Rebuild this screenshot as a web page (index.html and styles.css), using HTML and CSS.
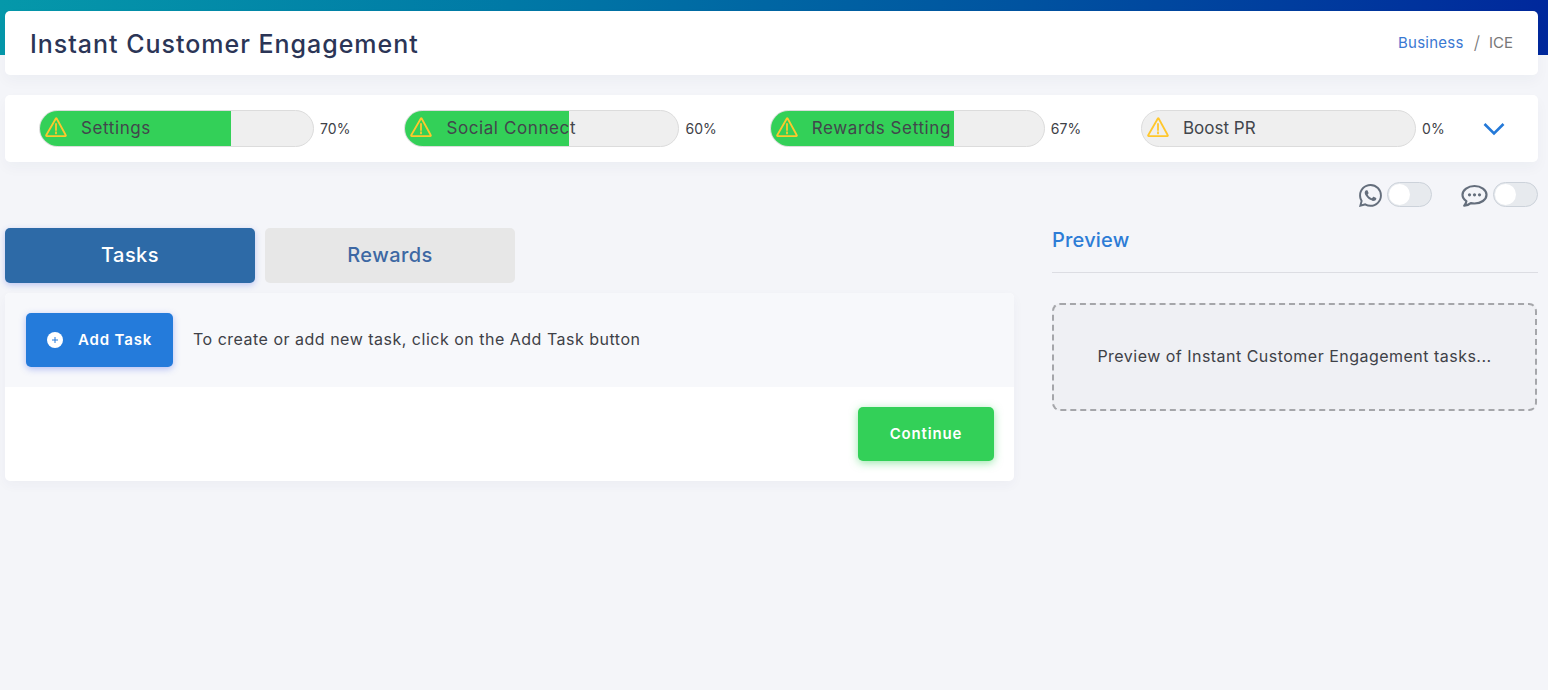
FILE: index.html
```html
<!DOCTYPE html>
<html lang="en">
<head>
<meta charset="utf-8">
<title>Instant Customer Engagement</title>
<link rel="stylesheet" href="styles.css">
</head>
<body>
<div class="page">
  <header class="card page-head">
    <h1 class="page-title">Instant Customer Engagement</h1>
    <nav class="crumbs"><a class="crumb-link">Business</a><span class="crumb-sep">/</span><span class="crumb-current">ICE</span></nav>
  </header>

  <section class="card progress-card">
    <div class="progress-item">
      <div class="pill">
        <div class="pill-fill" style="width:70%"></div>
        <div class="pill-label"><svg class="warn" viewBox="0 0 22 20"><path d="M11 1.2 1.2 18.2a.6.6 0 0 0 .5.9h18.6a.6.6 0 0 0 .5-.9L11.5 1.2a.3.3 0 0 0-.5 0Z"/><path d="M11 7v6M11 15.2v1.2"/></svg><span>Settings</span></div>
      </div>
      <span class="pct">70%</span>
    </div>
    <div class="progress-item">
      <div class="pill">
        <div class="pill-fill" style="width:60%"></div>
        <div class="pill-label"><svg class="warn" viewBox="0 0 22 20"><path d="M11 1.2 1.2 18.2a.6.6 0 0 0 .5.9h18.6a.6.6 0 0 0 .5-.9L11.5 1.2a.3.3 0 0 0-.5 0Z"/><path d="M11 7v6M11 15.2v1.2"/></svg><span>Social Connect</span></div>
      </div>
      <span class="pct">60%</span>
    </div>
    <div class="progress-item">
      <div class="pill">
        <div class="pill-fill" style="width:67%"></div>
        <div class="pill-label"><svg class="warn" viewBox="0 0 22 20"><path d="M11 1.2 1.2 18.2a.6.6 0 0 0 .5.9h18.6a.6.6 0 0 0 .5-.9L11.5 1.2a.3.3 0 0 0-.5 0Z"/><path d="M11 7v6M11 15.2v1.2"/></svg><span>Rewards Setting</span></div>
      </div>
      <span class="pct">67%</span>
    </div>
    <div class="progress-item progress-item-last">
      <div class="pill">
        <div class="pill-fill" style="width:0%"></div>
        <div class="pill-label"><svg class="warn" viewBox="0 0 22 20"><path d="M11 1.2 1.2 18.2a.6.6 0 0 0 .5.9h18.6a.6.6 0 0 0 .5-.9L11.5 1.2a.3.3 0 0 0-.5 0Z"/><path d="M11 7v6M11 15.2v1.2"/></svg><span>Boost PR</span></div>
      </div>
      <span class="pct">0%</span>
    </div>
    <svg class="chevron" viewBox="0 0 22 14"><path d="M1.5 2 11 11.5 20.5 2"/></svg>
  </section>

  <div class="channel-row">
    <div class="channel">
      <svg class="wa-icon" viewBox="0 0 16 16"><path d="M13.601 2.326A7.854 7.854 0 0 0 7.994 0C3.627 0 .068 3.558.064 7.926c0 1.399.366 2.76 1.057 3.965L0 16l4.204-1.102a7.933 7.933 0 0 0 3.79.965h.004c4.368 0 7.926-3.558 7.93-7.93A7.898 7.898 0 0 0 13.6 2.326zM7.994 14.521a6.573 6.573 0 0 1-3.356-.92l-.24-.144-2.494.654.666-2.433-.156-.251a6.56 6.56 0 0 1-1.007-3.505c0-3.626 2.957-6.584 6.591-6.584a6.56 6.56 0 0 1 4.66 1.931 6.557 6.557 0 0 1 1.928 4.66c-.004 3.639-2.961 6.592-6.592 6.592zm3.615-4.934c-.197-.099-1.17-.578-1.353-.646-.182-.065-.315-.099-.445.099-.133.197-.513.646-.627.775-.114.133-.232.148-.43.05-.197-.1-.836-.308-1.592-.985-.59-.525-.985-1.175-1.103-1.372-.114-.198-.011-.304.088-.403.087-.088.197-.232.296-.346.1-.114.133-.198.198-.33.065-.134.034-.248-.015-.347-.05-.099-.445-1.076-.612-1.47-.16-.389-.323-.335-.445-.34-.114-.007-.247-.007-.38-.007a.729.729 0 0 0-.529.247c-.182.198-.691.677-.691 1.654 0 .977.71 1.916.81 2.049.098.133 1.394 2.132 3.383 2.992.47.205.84.326 1.129.418.475.152.904.129 1.246.08.38-.058 1.171-.48 1.338-.943.164-.464.164-.86.114-.943-.049-.084-.182-.133-.38-.232z"/></svg>
      <span class="switch"><span class="knob"></span></span>
    </div>
    <div class="channel">
      <svg class="chat-icon" viewBox="0 0 27 24"><path class="chat-line" d="M13.500 2C7 2 1.500 5.900 1.500 10.800c0 2.500 1.300 4.700 3.900 6.300-.2 1.600-1 3.200-2.200 4.600 2.700-.3 5-1.300 6.600-2.600 1.200.3 2.400.4 3.700.4 6.500 0 12-3.800 12-8.700S20 2 13.500 2Z"/><circle cx="8.500" cy="10.800" r="1.600"/><circle cx="13.500" cy="10.800" r="1.600"/><circle cx="18.500" cy="10.800" r="1.600"/></svg>
      <span class="switch"><span class="knob"></span></span>
    </div>
  </div>

  <main class="columns">
    <div class="left-col">
      <div class="tabs">
        <button class="tab tab-active">Tasks</button>
        <button class="tab">Rewards</button>
      </div>
      <section class="task-panel">
        <div class="task-top">
          <button class="btn btn-add"><svg class="plus" viewBox="0 0 16 16"><circle cx="8" cy="8" r="8"/><path d="M8 5v6M5 8h6"/></svg>Add Task</button>
          <p class="task-hint">To create or add new task, click on the Add Task button</p>
        </div>
        <div class="task-foot">
          <button class="btn btn-continue">Continue</button>
        </div>
      </section>
    </div>
    <aside class="right-col">
      <h2 class="preview-title">Preview</h2>
      <div class="preview-box">Preview of Instant Customer Engagement tasks...</div>
    </aside>
  </main>
</div>
</body>
</html>
```
FILE: styles.css
```css
* { box-sizing: border-box; }
html, body { margin: 0; height: 100%; }
body {
  background: #f4f5f9 linear-gradient(90deg, #0598aa 0%, #0079a6 33%, #0053a0 66%, #00289c 100%) no-repeat 0 0 / 100% 55px;
  font-family: Inter, "Noto Sans", sans-serif;
  color: #3e4147;
  overflow: hidden;
}
.page { padding: 11px 10px 0 5px; }
.card {
  background: #fff;
  border-radius: 5px;
  box-shadow: 0 6px 14px rgba(40, 50, 90, .035);
}
.page-head {
  height: 64px;
  display: flex;
  align-items: center;
  justify-content: space-between;
  padding: 0 25px;
}
.page-title {
  margin: 1px 0 0;
  font-size: 25px;
  font-weight: 500;
  color: #2b3556;
  letter-spacing: .98px;
}
.crumbs { display: flex; align-items: center; font-size: 15px; margin-top: -2px; }
.crumb-link { color: #3a78d2; letter-spacing: .25px; }
.crumb-sep { margin: 0 9px 0 10px; color: #777; font-size: 18px; font-weight: 300; }
.crumb-current { color: #777; }

.progress-card {
  margin-top: 20px;
  height: 67px;
  display: flex;
  align-items: center;
  padding-left: 34px;
  gap: 54.4px;
}
.progress-item { display: flex; align-items: center; gap: 6px; }
.progress-item-last { margin-left: 5.8px; }
.pill {
  width: 275px;
  height: 37px;
  display: grid;
  border: 1px solid #dcdcdc;
  border-radius: 19px;
  background: #efefef;
  overflow: hidden;
}
.pill-fill { grid-area: 1 / 1; background: #33d058; height: 100%; }
.pill-label {
  grid-area: 1 / 1;
  display: flex;
  align-items: center;
  gap: 14px;
  padding: 0 0 2px 5px;
  font-size: 17px;
  color: #42464c;
  letter-spacing: .6px;
  white-space: nowrap;
}
.progress-item-last .pill-label { letter-spacing: 0; }
.warn { width: 22px; height: 20px; flex: none; margin-top: -1px; }
.warn path { fill: none; stroke: #ffc72c; stroke-width: 1.8; stroke-linecap: round; stroke-linejoin: round; }
.pct { font-size: 14px; width: 30px; white-space: nowrap; color: #3e4147; letter-spacing: .1px; }
.progress-item-last .pct { width: 27px; }
.chevron { width: 22px; height: 14px; margin-left: -20.2px; }
.chevron path { fill: none; stroke: #2479d8; stroke-width: 2.6; }

.channel-row {
  display: flex;
  justify-content: flex-end;
  gap: 29px;
  margin-top: 20px;
  height: 25px;
}
.channel { display: flex; align-items: center; }
.wa-icon { width: 23px; height: 23px; margin-top: 2px; margin-right: 4px; fill: #646e7c; }
.chat-icon { width: 27px; height: 24px; margin-top: 2px; margin-right: 4px; fill: #646e7c; }
.chat-line { fill: none; stroke: #646e7c; stroke-width: 2.2; stroke-linejoin: round; }
.switch {
  display: flex;
  align-items: center;
  width: 45px;
  height: 25px;
  margin-left: 1px;
  padding-left: 1px;
  background: #e7eaee;
  border: 1px solid #ccd2da;
  border-radius: 13px;
}
.knob { width: 21px; height: 21px; border-radius: 50%; background: #fff; }

.columns { display: flex; gap: 38px; margin-top: 21px; }
.left-col { width: 1009px; flex: none; }
.right-col { flex: 1; }
.tabs { display: flex; gap: 10px; }
.tab {
  width: 250px;
  height: 55px;
  padding: 0 0 2px;
  border: 0;
  border-radius: 5px;
  background: #e7e7e7;
  color: #3d68a3;
  font: 500 20px Inter, sans-serif;
  letter-spacing: .45px;
}
.tab-active {
  background: #2d6aa7;
  color: #fff;
  box-shadow: 0 2px 6px rgba(60, 90, 230, .3);
}
.task-panel {
  margin-top: 10px;
  background: #fff;
  border-radius: 5px;
  box-shadow: 0 4px 12px rgba(40, 50, 90, .04);
  overflow: hidden;
}
.task-top {
  height: 94px;
  display: flex;
  align-items: center;
  gap: 20px;
  padding-left: 21px;
  background: #f7f8fb;
}
.task-hint { margin: 0 0 2px; font-size: 16px; color: #3e4147; letter-spacing: .5px; }
.btn {
  border: 0;
  border-radius: 5px;
  height: 54px;
  color: #fff;
  font: 600 15px Inter, sans-serif;
  letter-spacing: .85px;
}
.btn-add {
  width: 147px;
  display: flex;
  align-items: center;
  gap: 15px;
  padding: 0 0 2px 21px;
  background: #247bdb;
  box-shadow: 0 2px 7px rgba(50, 80, 230, .35);
}
.plus { width: 16px; height: 16px; flex: none; margin-top: 2px; }
.plus circle { fill: #fff; }
.plus path { stroke: #247bdb; stroke-width: 1; fill: none; }
.task-foot {
  height: 94px;
  display: flex;
  justify-content: flex-end;
  align-items: center;
  padding-right: 20px;
}
.btn-continue {
  width: 136px;
  padding: 0 0 2px;
  background: #33d058;
  box-shadow: 0 2px 8px rgba(51, 208, 88, .5);
}
.preview-title {
  margin: 0;
  height: 45px;
  border-bottom: 1px solid #dcdde3;
  color: #2d7cd6;
  font-size: 20px;
  font-weight: 500;
  line-height: 24px;
  letter-spacing: .2px;
}
.preview-box {
  margin-top: 30px;
  width: 485px;
  height: 108px;
  display: flex;
  align-items: center;
  justify-content: center;
  padding-bottom: 2px;
  background: #eff0f4;
  border: 2px dashed #a5a6aa;
  border-radius: 8px;
  font-size: 16px;
  color: #3e4147;
  letter-spacing: .48px;
}
```
